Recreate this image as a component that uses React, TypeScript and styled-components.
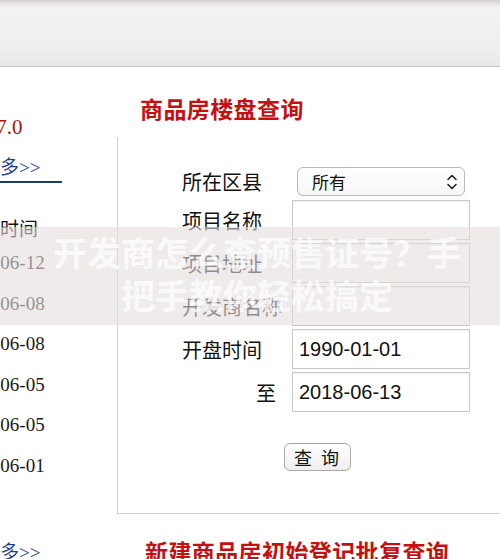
import styled, { createGlobalStyle } from 'styled-components';

const SERIF = `"Liberation Serif", "Noto Sans CJK SC", serif`;
const SANS = `"Liberation Sans", "Noto Sans CJK SC", sans-serif`;

const GlobalStyle = createGlobalStyle`
  html, body {
    margin: 0;
    padding: 0;
    background: #ffffff;
    overflow: hidden;
  }
`;

const Page = styled.div`
  position: relative;
  width: 500px;
  height: 559px;
  overflow: hidden;
  font-family: ${SERIF};
  color: #111;
`;

const TopBar = styled.div`
  height: 66px;
  background: linear-gradient(#d6cbd0 0, #e9e4e6 4px, #f4f2f3 8px, #efeded 50px, #e9e8e8 100%);
  border-bottom: 1px solid #c4c4c4;
`;

const Body = styled.div`
  display: flex;
`;

const Sidebar = styled.div`
  width: 117px;
  flex-shrink: 0;
  overflow: hidden;
  padding-top: 46px;
  font-size: 19px;
  white-space: nowrap;
`;

const Version = styled.div`
  height: 28px;
  line-height: 28px;
  margin-left: -19px;
  color: #b01010;
  font-size: 21px;
`;

const MoreLink = styled.div<{ $rule?: boolean; $top: number }>`
  margin-top: ${p => p.$top}px;
  height: 26px;
  line-height: 26px;
  width: 62px;
  color: #1d3f8c;
  ${p => (p.$rule ? 'border-bottom: 2px solid #1c3a74;' : '')}

  span {
    display: inline-block;
    margin-left: -19px;
  }
`;

const ListHead = styled.div`
  margin-top: 33px;
  height: 27px;
  line-height: 27px;
  margin-left: -38px;
`;

const DateRow = styled.div`
  height: 40.6px;
  line-height: 40.6px;
  margin-left: -44px;
  color: #1a1a1a;
`;

const Main = styled.div`
  flex: 1;
  display: flex;
  flex-direction: column;
`;

const Title = styled.h2<{ $top: number; $left?: number }>`
  margin: ${p => p.$top}px 0 0 ${p => p.$left ?? 23}px;
  height: 30px;
  line-height: 30px;
  font-size: 23px;
  font-weight: bold;
  color: #c41010;
  white-space: nowrap;
  letter-spacing: 0.4px;
`;

const QueryBox = styled.div`
  margin-top: 11px;
  height: 377px;
  box-sizing: border-box;
  border-left: 1px solid #d2d2d2;
  border-bottom: 1px solid #d2d2d2;
  padding: 29px 0 0 64px;
`;

const FormGrid = styled.div`
  display: grid;
  grid-template-columns: 110px 178px;
  grid-auto-rows: 40px;
  grid-template-rows: 31px;
  row-gap: 3px;
  align-items: center;
`;

const Label = styled.label<{ $indent?: number }>`
  font-size: 20px;
  padding-left: ${p => p.$indent ?? 0}px;
  white-space: nowrap;
`;

const SelectBox = styled.div`
  margin: 0 5px;
  height: 29px;
  box-sizing: border-box;
  border: 1px solid #b9b9b9;
  border-radius: 6px;
  background: linear-gradient(#ffffff, #f7f7f7);
  display: flex;
  align-items: center;
  justify-content: space-between;
  padding: 0 6px 0 14px;
  font-family: ${SANS};
  font-size: 17px;
`;

const TextBox = styled.div`
  height: 40px;
  box-sizing: border-box;
  border: 1px solid #c9c9c9;
  box-shadow: inset 0 1px 1px rgba(0, 0, 0, 0.06);
  background: #fff;
  padding-left: 6px;
  display: flex;
  align-items: center;
  font-family: ${SANS};
  font-size: 20px;
  color: #111;
`;

const ButtonRow = styled.div`
  margin: 31px 0 0 102px;
`;

const QueryButton = styled.button`
  width: 67px;
  height: 28px;
  border: 1px solid #a9a9a9;
  border-radius: 6px;
  background: linear-gradient(#ffffff, #eeeeee);
  font-family: ${SANS};
  font-size: 18px;
  letter-spacing: 2px;
  color: #111;
  padding: 0;
`;

const Watermark = styled.div`
  position: absolute;
  left: 0;
  right: 0;
  top: 227px;
  height: 98px;
  background: rgba(228, 222, 222, 0.6);
  display: flex;
  flex-direction: column;
  align-items: center;
  justify-content: center;
  padding-left: 14px;
  font-family: ${SANS};
  font-weight: bold;
  font-size: 34px;
  line-height: 43px;
  color: rgba(255, 255, 255, 0.72);
  white-space: nowrap;
`;

const Chevrons = () => (
  <svg width="12" height="18" viewBox="0 0 12 18" fill="none" stroke="#222" strokeWidth="1.6" strokeLinecap="round" strokeLinejoin="round">
    <path d="M2 6.5 L6 2.5 L10 6.5" />
    <path d="M2 11.5 L6 15.5 L10 11.5" />
  </svg>
);

const dates = ['2018-06-12', '2018-06-08', '2018-06-08', '2018-06-05', '2018-06-05', '2018-06-01'];

export default function App() {
  return (
    <Page>
      <GlobalStyle />
      <TopBar />
      <Body>
        <Sidebar>
          <Version>V7.0</Version>
          <MoreLink $rule $top={14}>
            <span>更多&gt;&gt;</span>
          </MoreLink>
          <ListHead>发布时间</ListHead>
          {dates.map((d, i) => (
            <DateRow key={i}>{d}</DateRow>
          ))}
          <MoreLink $top={53}>
            <span>更多&gt;&gt;</span>
          </MoreLink>
        </Sidebar>
        <Main>
          <Title $top={29}>商品房楼盘查询</Title>
          <QueryBox>
            <FormGrid>
              <Label>所在区县</Label>
              <SelectBox>
                <span>所有</span>
                <Chevrons />
              </SelectBox>
              <Label>项目名称</Label>
              <TextBox />
              <Label>项目地址</Label>
              <TextBox />
              <Label>开发商名称</Label>
              <TextBox />
              <Label>开盘时间</Label>
              <TextBox>1990-01-01</TextBox>
              <Label $indent={74}>至</Label>
              <TextBox>2018-06-13</TextBox>
            </FormGrid>
            <ButtonRow>
              <QueryButton>查 询</QueryButton>
            </ButtonRow>
          </QueryBox>
          <Title $top={25} $left={28}>新建商品房初始登记批复查询</Title>
        </Main>
      </Body>
      <Watermark>
        <div>开发商怎么查预售证号？手</div>
        <div>把手教你轻松搞定</div>
      </Watermark>
    </Page>
  );
}
